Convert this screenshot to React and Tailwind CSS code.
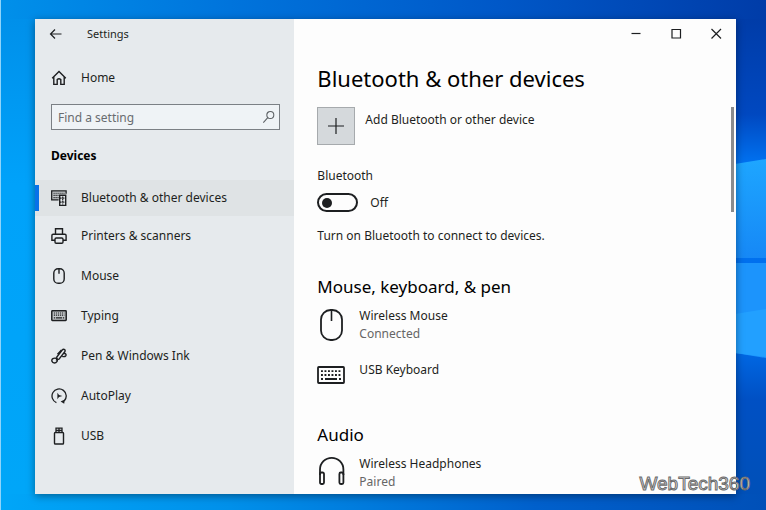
import { useState } from "react";

const Icon = ({ className = "size-4", viewBox = "0 0 16 16", children }) => (
  <svg
    className={`shrink-0 ${className}`}
    viewBox={viewBox}
    fill="none"
    stroke="currentColor"
    strokeWidth="1.2"
    aria-hidden="true"
  >
    {children}
  </svg>
);

const HomeIcon = () => (
  <Icon>
    <path d="M1.2 8.2 8 1.5l6.8 6.700M2.800 6.800v7.600h3.400V9.600q1.800-1.600 3.600 0v4.800h3.400V6.800" strokeWidth="1.4" />
  </Icon>
);

const DevicesIcon = () => (
  <Icon>
    <path d="M.7.8h14.600v3.400H8v5.600H.700z" fill="#c4c8ca" stroke="none" />
    <path d="M7.600 9.800H.700v-9h14.400v3" strokeWidth="1.300" />
    <path d="M2.500 3.200h11M2.500 5.400h5M2.500 7.600h5" strokeDasharray="1.200 .8" strokeWidth="1.100" />
    <path d="M8.700 5.200h6v10.200h-6z" fill="#e6eaed" strokeWidth="1.400" />
    <path d="M11.700 6.500v8M9 8.200h5.500M9 12.200h5.500" strokeDasharray="1.600 .7" />
  </Icon>
);

const PrinterIcon = () => (
  <Icon>
    <path d="M4.500 6.200V.8h7v5.400M4 12.200H.9V7.400q0-1.200 1.200-1.200h11.800q1.200 0 1.200 1.200v4.800H12" strokeWidth="1.4" />
    <rect x="4" y="10" width="8" height="5.200" rx="1.200" strokeWidth="1.4" />
  </Icon>
);

const MouseIcon = () => (
  <Icon>
    <rect x="2.800" y=".7" width="10.400" height="14.600" rx="4.400" strokeWidth="1.4" />
    <path d="M8 .8v5" strokeWidth="1.4" />
  </Icon>
);

const TypingIcon = () => (
  <Icon>
    <rect x=".8" y="2.800" width="14.400" height="9.600" rx=".6" fill="#c4c8ca" strokeWidth="1.500" />
    <path d="M2.800 5h10.600M2.800 7.200h10.600" strokeDasharray="1.200 .8" strokeWidth="1.200" />
    <path d="M2.800 9.800h1.400m.8 0h6m.8 0h1.400" strokeWidth="1.200" />
  </Icon>
);

const PenIcon = () => (
  <Icon>
    <path d="M5.600 11.800 5.800 9 11 2.200q1.400-1.600 2.600-.6t-.2 2.600L8 11.200Z" strokeWidth="1.4" />
    <path d="m6.500 6.300 4-4.300M5.900 10.400c1.200 2.600-.4 4.600-2.500 4.600-2.500 0-3.500-3-1.500-4.400 1.400-.9 2.600-.4 4-.2" strokeWidth="1.4" />
    <path d="M11.200 8.400c1.600.5 2.900.2 3.600-.7.800-1.200-.4-2.300-2-2.500" strokeWidth="1.4" />
  </Icon>
);

const AutoPlayIcon = () => (
  <Icon>
    <path d="M5.400 14.600A7.100 7.100 0 1 1 13.200 13" strokeWidth="1.3" />
    <path d="M9.600 13.600l3.600 2.200.6-4.200Z" fill="currentColor" stroke="none" />
    <path d="M6.400 4.800v6.400L8 9l3.400-1L8 7Z" fill="currentColor" stroke="none" />
  </Icon>
);

const UsbIcon = () => (
  <Icon className="h-[18px] w-4" viewBox="0 0 16 18">
    <rect x="3.500" y="5.500" width="9" height="11.500" rx=".8" strokeWidth="1.4" />
    <path d="M5 5.500V1.200h6v4.300M8 1.200v4.300M5 3.300h6" strokeWidth="1.3" />
  </Icon>
);

const LargeMouseIcon = () => (
  <Icon className="h-[34px] w-7" viewBox="0 0 28 34">
    <rect x="4" y="3" width="21" height="30" rx="9.5" strokeWidth="1.8" />
    <path d="M14.5 3v11" strokeWidth="1.6" />
  </Icon>
);

const LargeKeyboardIcon = () => (
  <Icon className="h-6 w-7" viewBox="0 0 28 24">
    <rect x="1" y="6" width="26" height="16" rx=".8" strokeWidth="1.8" />
    <path d="M4 10.200h20.500M4 14h20.500" strokeWidth="1.800" strokeDasharray="1.900 1.600" />
    <path d="M4 18h2m2 0h12m2 0h2" strokeWidth="1.8" />
  </Icon>
);

const HeadphonesIcon = () => (
  <Icon className="h-[34px] w-7" viewBox="0 0 28 34">
    <path d="M3 20v-5.500a11.700 11.700 0 0 1 23.400 0V20" strokeWidth="1.8" />
    <rect x="3" y="17.500" width="4" height="11.500" rx="1.4" strokeWidth="1.8" />
    <rect x="22.400" y="17.500" width="4" height="11.500" rx="1.4" strokeWidth="1.8" />
  </Icon>
);

const navItems = [
  { label: "Bluetooth & other devices", icon: DevicesIcon },
  { label: "Printers & scanners", icon: PrinterIcon },
  { label: "Mouse", icon: MouseIcon },
  { label: "Typing", icon: TypingIcon },
  { label: "Pen & Windows Ink", icon: PenIcon },
  { label: "AutoPlay", icon: AutoPlayIcon },
  { label: "USB", icon: UsbIcon },
];

const Wallpaper = () => (
  <svg
    className="absolute inset-0 h-full w-full"
    viewBox="0 0 766 510"
    preserveAspectRatio="none"
    aria-hidden="true"
  >
    <defs>
      <linearGradient id="base">
        <stop offset="0" stopColor="#0090ea" />
        <stop offset=".3" stopColor="#0074dc" />
        <stop offset=".65" stopColor="#0058c8" />
        <stop offset="1" stopColor="#003ca8" />
      </linearGradient>
      <linearGradient id="bottom">
        <stop offset="0" stopColor="#00a6f8" />
        <stop offset=".3" stopColor="#0090ea" />
        <stop offset=".7" stopColor="#0060cc" />
        <stop offset="1" stopColor="#0050b8" />
      </linearGradient>
      <linearGradient id="left" x1="0" y1="0" x2="0" y2="1">
        <stop offset="0" stopColor="#0090ea" />
        <stop offset=".35" stopColor="#00a2fa" />
        <stop offset="1" stopColor="#00a6f8" />
      </linearGradient>
      <linearGradient id="right" x1="0" y1="0" x2="0" y2="1">
        <stop offset="0" stopColor="#003ca8" />
        <stop offset=".2" stopColor="#0048c0" />
        <stop offset=".32" stopColor="#0078f8" />
        <stop offset=".7" stopColor="#0068e4" />
        <stop offset=".8" stopColor="#0050c4" />
        <stop offset="1" stopColor="#0050b8" />
      </linearGradient>
      <linearGradient id="pane" x1="0" y1="0" x2="0" y2="1">
        <stop offset="0" stopColor="#1ea6ff" />
        <stop offset="1" stopColor="#1688f6" />
      </linearGradient>
    </defs>
    <rect width="766" height="255" fill="url(#base)" />
    <rect y="255" width="766" height="255" fill="url(#bottom)" />
    <rect y="19" width="40" height="475" fill="url(#left)" />
    <rect x="730" y="19" width="36" height="475" fill="url(#right)" />
    <path d="M735 164 766 159v99h-31Z" fill="url(#pane)" />
    <path d="M735 263h31v95l-31-5Z" fill="#1c94fc" />
    <path d="M735 314l31-5v48l-31-4Z" fill="#22a0ff" />
    <rect width="1" height="510" fill="#8fd4fa" />
  </svg>
);

const DeviceRow = ({ icon: DeviceIcon, name, status }) => (
  <li className="flex gap-3.5">
    <DeviceIcon />
    <div className="leading-[18px]">
      <p>{name}</p>
      {status && <p className="text-[#666]">{status}</p>}
    </div>
  </li>
);

const Sidebar = ({ active, onSelect }) => (
  <aside className="w-[37%] shrink-0 bg-[#e6eaed]">
    <div className="flex h-[30px] items-center gap-6 pl-3.5 text-[11px]">
      <button type="button" aria-label="Back">
        <Icon className="h-3 w-[14px]" viewBox="0 0 14 12">
          <path d="M12.5 6H1.5M6 1.5 1.5 6 6 10.5" />
        </Icon>
      </button>
      <span>Settings</span>
    </div>

    <a href="#home" className="mt-[11px] flex h-9 items-center gap-3.5 pl-4">
      <HomeIcon />
      Home
    </a>

    <div className="relative mt-2 mr-3.5 ml-4">
      <input
        type="search"
        aria-label="Find a setting"
        placeholder="Find a setting"
        className="block h-[26px] w-full border border-[#7b8085] bg-[#eff3f6] pr-7 pl-1.5 outline-none placeholder:text-[#686c70]"
      />
      <Icon className="absolute top-1.5 right-1 size-3.5 text-[#5c6064]">
        <circle cx="9.5" cy="5.8" r="4" />
        <path d="M6.6 8.8 1.5 14.5" />
      </Icon>
    </div>

    <h2 className="mt-[17px] pl-4 leading-[18px] font-bold text-black">Devices</h2>

    <nav className="mt-[15px]">
      {navItems.map(({ label, icon: NavIcon }) => (
        <a
          key={label}
          href="#devices"
          onClick={() => onSelect(label)}
          className={`flex items-center ${active === label ? "h-9 bg-[#dfe3e5]" : "h-10"}`}
        >
          <span className={`mr-3 h-[26px] w-1 ${active === label ? "bg-[#0872e8]" : ""}`} />
          <NavIcon />
          <span className="ml-3.5">{label}</span>
        </a>
      ))}
    </nav>
  </aside>
);

const App = () => {
  const [active, setActive] = useState("Bluetooth & other devices");
  const [bluetooth, setBluetooth] = useState(false);

  return (
    <div className="relative flex min-h-screen flex-col pt-[19px] pr-[30px] pb-4 pl-[35px] font-['Noto_Sans','Open_Sans',sans-serif] text-xs text-[#1d1f21]">
      <Wallpaper />

      <div className="relative flex flex-1 bg-[#fdfdfd] shadow-[0_2px_8px_rgba(0,0,0,0.4)]">
        <Sidebar active={active} onSelect={setActive} />

        <main className="flex flex-1 flex-col">
          {/* Window controls */}
          <div className="flex h-[30px] items-center justify-end gap-7 pr-3.5">
            <button type="button" aria-label="Minimize">
              <Icon className="size-3" viewBox="0 0 12 12">
                <path d="M1.500 5.500h9" />
              </Icon>
            </button>
            <button type="button" aria-label="Maximize">
              <Icon className="size-3" viewBox="0 0 12 12">
                <path d="M2 1.500h8.500v8.500H2z" />
              </Icon>
            </button>
            <button type="button" aria-label="Close">
              <Icon className="size-3" viewBox="0 0 12 12">
                <path d="m1.500 1 9.500 9.500m0-9.500-9.500 9.500" />
              </Icon>
            </button>
          </div>

          <div className="flex flex-1 justify-between">
            <div className="pl-[23px]">
              <h1 className="mt-[13px] text-[22px] leading-8 text-black">
                Bluetooth & other devices
              </h1>

              <button type="button" className="mt-[13px] flex items-start gap-2.5 text-left">
                <span className="flex size-[38px] items-center justify-center border border-[#a6aaad] bg-[#d5d9dc]">
                  <Icon>
                    <path d="M8 0v16M0 8h16" />
                  </Icon>
                </span>
                <span className="mt-1 leading-[18px]">Add Bluetooth or other device</span>
              </button>

              <label htmlFor="bluetooth" className="mt-[22px] block leading-[18px]">
                Bluetooth
              </label>
              <div className="mt-2 flex h-[19px] items-center gap-3">
                <input
                  id="bluetooth"
                  type="checkbox"
                  role="switch"
                  checked={bluetooth}
                  onChange={(e) => setBluetooth(e.target.checked)}
                  className="flex h-[19px] w-[41px] appearance-none items-center rounded-full border-2 border-[#1d1f21] px-[3px] before:size-2.5 before:rounded-full before:bg-[#1d1f21] checked:justify-end"
                />
                <span>{bluetooth ? "On" : "Off"}</span>
              </div>
              <p className="mt-[15px] leading-[18px]">Turn on Bluetooth to connect to devices.</p>

              <h2 className="mt-[30px] text-[17px] leading-6 text-black">
                Mouse, keyboard, & pen
              </h2>
              <ul className="mt-2 space-y-[18px]">
                <DeviceRow icon={LargeMouseIcon} name="Wireless Mouse" status="Connected" />
                <DeviceRow icon={LargeKeyboardIcon} name="USB Keyboard" />
              </ul>

              <h2 className="mt-[38px] text-[17px] leading-6 text-black">Audio</h2>
              <ul className="mt-2">
                <DeviceRow icon={HeadphonesIcon} name="Wireless Headphones" status="Paired" />
              </ul>
            </div>

            {/* Scroll thumb */}
            <div className="mt-[58px] mr-0.5 h-[105px] w-[3px] bg-[#8a8c8e]" />
          </div>
        </main>
      </div>

      <span className="absolute right-4 bottom-3.5 font-['Liberation_Sans',Arial,sans-serif] text-[19px] leading-6 text-[#f4f4f4] [-webkit-text-stroke:1px_#6b6b6b]">
        WebTech360
      </span>
    </div>
  );
};

export default App;
